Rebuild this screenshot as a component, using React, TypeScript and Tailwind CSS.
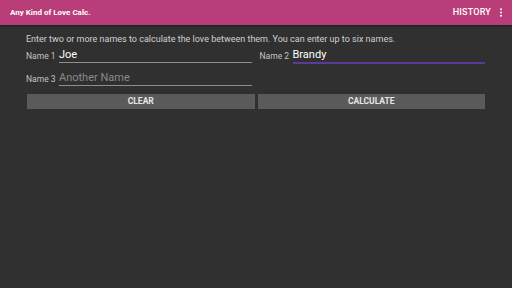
import React from "react";

export default function App() {
  return (
    <div className="w-[512px] h-[288px] bg-[#303030] flex flex-col" style={{ fontFamily: "Roboto, 'Liberation Sans', sans-serif" }}>
      <div className="h-[25px] bg-[#b83d78] flex items-center pl-[10px] pr-[9px] shadow-[0_1px_2px_rgba(0,0,0,0.4)]">
        <div className="text-white text-[8px] font-bold flex-1 leading-none">Any Kind of Love Calc.</div>
        <div className="text-white text-[9px] font-medium leading-none tracking-[0.2px]">HISTORY</div>
        <svg width="4" height="9" viewBox="0 0 4 9" className="ml-[8px]">
          <circle cx="2" cy="1.2" r="1" fill="#fff" />
          <circle cx="2" cy="4.5" r="1" fill="#fff" />
          <circle cx="2" cy="7.8" r="1" fill="#fff" />
        </svg>
      </div>
      <div className="pl-[26px] pr-[27px] pt-[8px]">
        <div className="text-[9px] text-[#d0d0d0] leading-[12px]">
          Enter two or more names to calculate the love between them. You can enter up to six names.
        </div>
        <div className="grid grid-cols-2 gap-x-[8px] gap-y-[5px]">
          <Field label="Name 1" value="Joe" />
          <Field label="Name 2" value="Brandy" active />
          <Field label="Name 3" placeholder="Another Name" />
        </div>
        <div className="grid grid-cols-2 gap-x-[3px] mt-[8px] pl-[1px]">
          <button className="h-[15px] bg-[#5a5a5a] text-[#e6e6e6] text-[8.5px] font-bold leading-none">CLEAR</button>
          <button className="h-[15px] bg-[#5a5a5a] text-[#e6e6e6] text-[8.5px] font-bold leading-none">CALCULATE</button>
        </div>
      </div>
    </div>
  );
}

function Field({ label, value, placeholder, active }: { label: string; value?: string; placeholder?: string; active?: boolean }) {
  return (
    <div className="flex items-end h-[18px]">
      <div className="text-[8.5px] text-[#c4c4c4] w-[33px] pb-[3px] leading-none">{label}</div>
      <div className={`flex-1 flex items-center ${active ? "h-[17px] -mb-[1px] border-b-2 border-[#5b3a9a]" : "h-[16px] border-b border-[#8e8e8e]"}`}>
        {value ? (
          <span className="text-[11px] text-white leading-none">{value}</span>
        ) : (
          <span className="text-[11px] text-[#8a8a8a] leading-none">{placeholder}</span>
        )}
      </div>
    </div>
  );
}
